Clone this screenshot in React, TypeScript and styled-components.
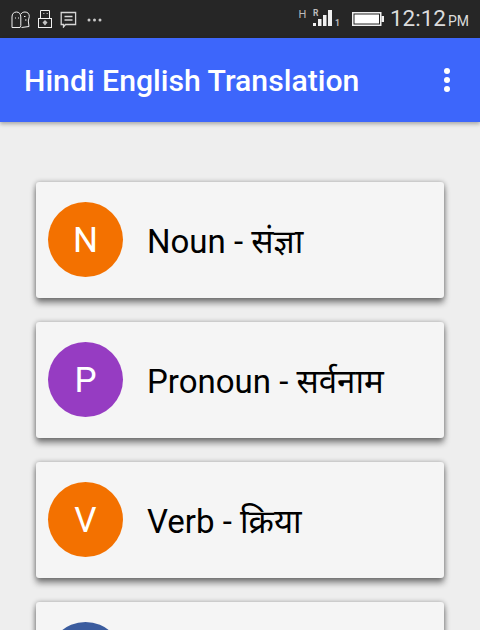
import React from "react";
import styled, { createGlobalStyle } from "styled-components";

const Global = createGlobalStyle`
  html, body { margin: 0; padding: 0; background: #eeeeee; }
  body { font-family: Roboto, "Noto Sans", sans-serif; }
`;

const Screen = styled.div`
  width: 480px;
  height: 630px;
  overflow: hidden;
  display: flex;
  flex-direction: column;
  background: #eeeeee;
`;

const StatusBar = styled.div`
  height: 38px;
  flex: none;
  background: #262626;
  display: flex;
  align-items: center;
  justify-content: space-between;
  padding: 0 11px;
`;

const LeftIcons = styled.div`
  display: flex;
  align-items: center;
  gap: 8px;
`;

const RightIcons = styled.div`
  display: flex;
  align-items: center;
  gap: 10px;
`;

const Clock = styled.span`
  font-size: 22.5px;
  line-height: 38px;
  margin-left: -4px;
  color: #dcdcdc;
`;

const Meridiem = styled.span`
  font-size: 14px;
  margin-left: 2px;
`;

const AppBar = styled.header`
  height: 84px;
  flex: none;
  background: #3d66fb;
  display: flex;
  align-items: center;
  justify-content: space-between;
  padding: 0 30px 0 24px;
  box-shadow: 0 2px 4px rgba(0, 0, 0, 0.3);
  position: relative;
  z-index: 1;
`;

const Title = styled.h1`
  margin: 0;
  color: #ffffff;
  font-size: 30.2px;
  font-weight: 500;
`;

const MenuDots = styled.div`
  display: flex;
  flex-direction: column;
  gap: 3px;
`;

const Dot = styled.span`
  width: 6px;
  height: 6px;
  border-radius: 50%;
  background: #ffffff;
`;

const List = styled.main`
  display: flex;
  flex-direction: column;
  gap: 24px;
  padding: 60px 36px 0;
`;

const Card = styled.div`
  height: 116px;
  flex: none;
  box-sizing: border-box;
  background: #f5f5f5;
  border-radius: 3px;
  display: flex;
  align-items: center;
  padding: 0 12px 2px;
  gap: 24px;
  box-shadow: 0 5px 6px rgba(0, 0, 0, 0.45), 0 0 5px rgba(0, 0, 0, 0.3);
`;

const Avatar = styled.div<{ $color: string }>`
  width: 75px;
  height: 75px;
  flex: none;
  box-sizing: border-box;
  padding-top: 2px;
  border-radius: 50%;
  background: ${(p) => p.$color};
  color: #ffffff;
  font-size: 35px;
  display: flex;
  align-items: center;
  justify-content: center;
`;

const Label = styled.span`
  margin-top: 3px;
  font-size: 33px;
  color: #000000;
  font-family: Roboto, "Noto Sans", "Noto Sans Devanagari", "Lohit Devanagari", sans-serif;
`;

const MoreSvg = styled.svg`
  margin-left: 2px;
  margin-top: 1px;
`;

const FaceIcon = () => (
  <svg width="19" height="18" viewBox="0 -1 19 18" fill="none" stroke="#f0f0f0" strokeWidth="1">
    <path d="M1 16.5V6C1 2.8 2.8 1 5.5 1C8 1 9.8 2.8 9.8 6V14.5L9 16.5H1Z" />
    <path d="M10 3C11 1.4 12.5 1 14 1C16.8 1 18.3 2.8 18.3 5.5L17.3 10L18 15.5L10.5 16.5" />
    <path d="M4 7H5M7 7H8M13 5.5H14.5M14 9H15.5" />
  </svg>
);

const UsbIcon = () => (
  <svg width="14" height="18" viewBox="0 0 14 18" fill="none" stroke="#f0f0f0" strokeWidth="1">
    <path d="M2.5 8V0.5H11.5V8" />
    <rect x="0.5" y="8.5" width="13" height="9" />
    <path d="M5 3.5H6.5M8.5 3.5H10" stroke="#a0a0a0" />
    <path d="M7 10L9.5 12.5L7 15.5L4.5 12.5Z" fill="#c4c4c4" stroke="none" />
  </svg>
);

const MessageIcon = () => (
  <svg width="17" height="18" viewBox="0 0 17 18" fill="none" stroke="#d6d6d6" strokeWidth="1.3">
    <path d="M1.2 2.5H15.6V14.5H5.5L3.5 17V14.5H1.2Z" />
    <path d="M4.5 6.5H12.5M4.5 10H12.5" strokeWidth="1.5" />
  </svg>
);

const MoreIcon = () => (
  <MoreSvg width="15" height="4" viewBox="0 0 15 4" fill="#c8c8c8">
    <circle cx="2" cy="2" r="1.5" />
    <circle cx="7.5" cy="2" r="1.5" />
    <circle cx="13" cy="2" r="1.5" />
  </MoreSvg>
);

const SignalIcon = () => (
  <svg width="44" height="24" viewBox="0 0 44 24">
    <g fill="#bcbcbc" fontFamily="Roboto, sans-serif">
      <text x="0.5" y="11" fontSize="11">H</text>
      <text x="15" y="9" fontSize="8.5" fontWeight="700">R</text>
      <text x="37" y="19" fontSize="8.5" fontWeight="700">1</text>
    </g>
    <g fill="#f0f0f0">
      <rect x="15" y="16" width="3" height="3" />
      <rect x="20" y="12" width="3.5" height="7" />
      <rect x="25" y="8" width="3.5" height="11" />
      <rect x="30" y="3" width="4" height="16" />
    </g>
  </svg>
);

const BatteryIcon = () => (
  <svg width="32" height="14" viewBox="0 0 32 14">
    <rect x="0.75" y="0.75" width="28" height="12.5" fill="none" stroke="#f0f0f0" strokeWidth="1.5" />
    <rect x="2.5" y="2.5" width="24.5" height="9" fill="#ffffff" />
    <rect x="29.5" y="4" width="2.5" height="6" fill="#f0f0f0" />
  </svg>
);

const items = [
  { id: "n", letter: "N", color: "#f37100", text: "Noun - संज्ञा" },
  { id: "p", letter: "P", color: "#963cc2", text: "Pronoun - सर्वनाम" },
  { id: "v", letter: "V", color: "#f37100", text: "Verb - क्रिया" },
  { id: "x", letter: "", color: "#3b5c9e", text: "" },
];

export default function App() {
  return (
    <Screen>
      <Global />
      <StatusBar>
        <LeftIcons>
          <FaceIcon />
          <UsbIcon />
          <MessageIcon />
          <MoreIcon />
        </LeftIcons>
        <RightIcons>
          <SignalIcon />
          <BatteryIcon />
          <Clock>
            12:12<Meridiem>PM</Meridiem>
          </Clock>
        </RightIcons>
      </StatusBar>
      <AppBar>
        <Title>Hindi English Translation</Title>
        <MenuDots>
          <Dot />
          <Dot />
          <Dot />
        </MenuDots>
      </AppBar>
      <List>
        {items.map((item) => (
          <Card key={item.id}>
            <Avatar $color={item.color}>{item.letter}</Avatar>
            <Label>{item.text}</Label>
          </Card>
        ))}
      </List>
    </Screen>
  );
}
